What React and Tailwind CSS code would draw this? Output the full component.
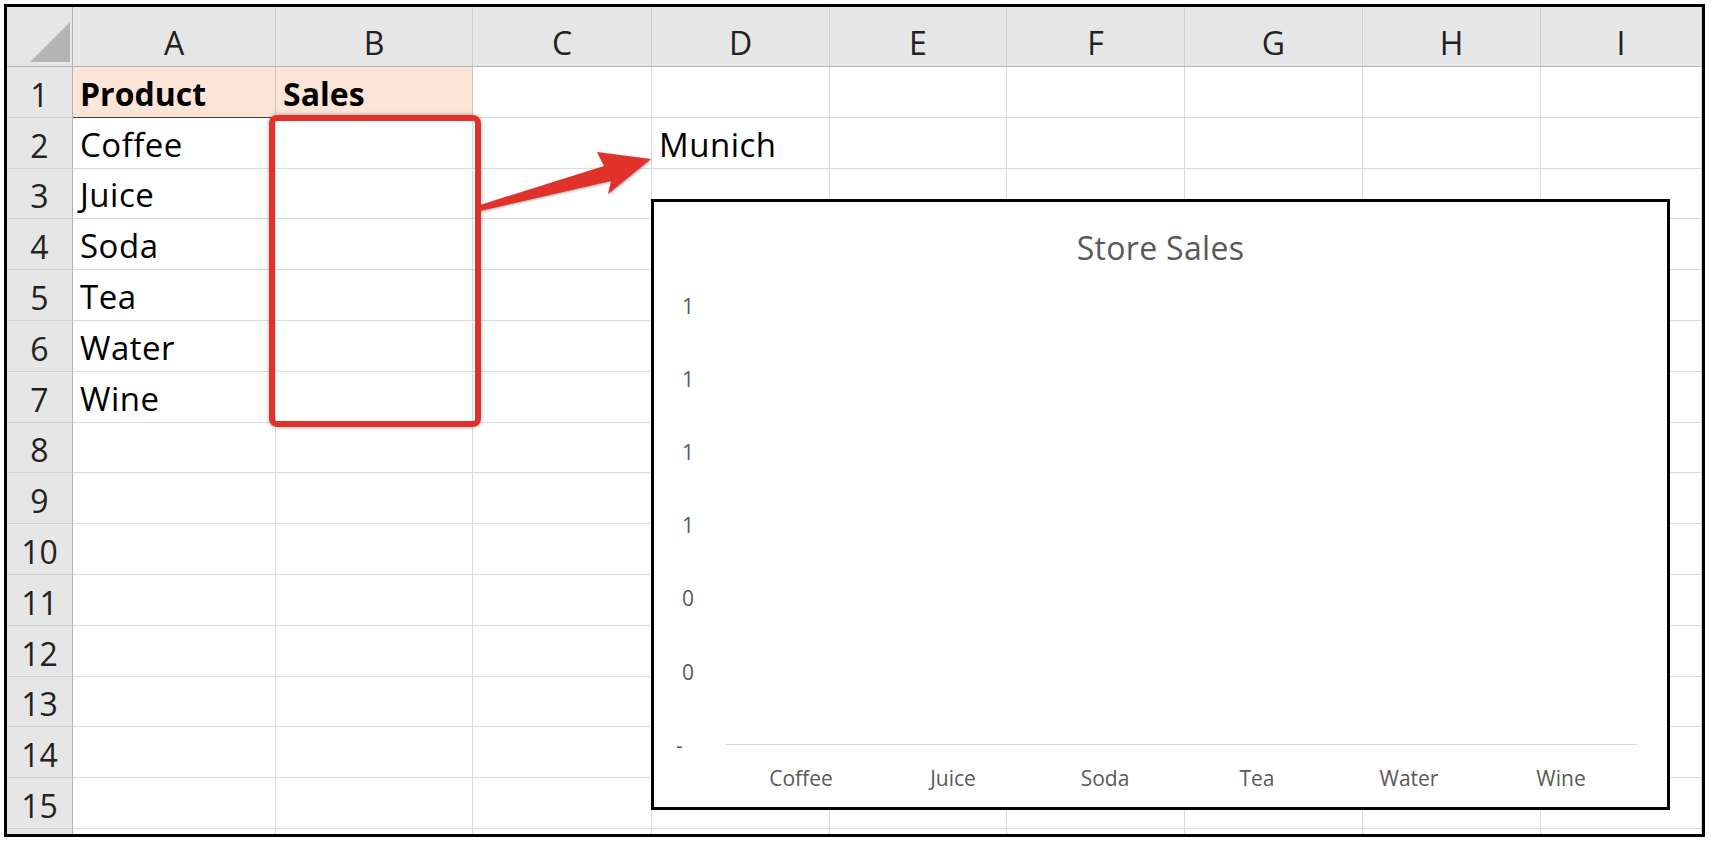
import React from 'react';

const columns = [
  { letter: 'A', width: 'w-[203px]' },
  { letter: 'B', width: 'w-[197px]' },
  { letter: 'C', width: 'w-[179px]' },
  { letter: 'D', width: 'w-[178px]' },
  { letter: 'E', width: 'w-[177px]' },
  { letter: 'F', width: 'w-[178px]' },
  { letter: 'G', width: 'w-[178px]' },
  { letter: 'H', width: 'w-[178px]' },
  { letter: 'I', width: 'flex-1' },
];

// cell contents keyed by "col+row"
const cells = {
  A1: { text: 'Product', bold: true },
  B1: { text: 'Sales', bold: true },
  A2: { text: 'Coffee' },
  A3: { text: 'Juice' },
  A4: { text: 'Soda' },
  A5: { text: 'Tea' },
  A6: { text: 'Water' },
  A7: { text: 'Wine' },
  D2: { text: 'Munich' },
};

const rows = Array.from({ length: 15 }, (_, i) => i + 1);
const categories = ['Coffee', 'Juice', 'Soda', 'Tea', 'Water', 'Wine'];
const axisLabels = ['1', '1', '1', '1', '0', '0', '-'];

const font = { fontFamily: '"Open Sans", "Noto Sans", sans-serif' };

const Chart = () => (
  <div className="absolute left-[644px] top-[192px] w-[1019px] h-[611px] border-[3px] border-black bg-white flex flex-col text-[#595959]">
    <div className="h-[67px] pt-[28px] text-center text-[32px] leading-[36px] tracking-[0.3px]">Store Sales</div>
    <div className="flex flex-1">
      <div className="w-[71px] flex flex-col">
        {axisLabels.map((label, i) => (
          <div
            key={i}
            className={`h-[73.2px] flex items-center text-[21px] leading-[24px] ${label === '-' ? 'pl-[22px]' : 'pl-[28px]'}`}
          >
            {label}
          </div>
        ))}
      </div>
      <div className="flex-1 mr-[30px] flex flex-col">
        <div className="h-[475px]"></div>
        <div className="border-t border-[#d9d9d9] grid grid-cols-6 pt-[19px]">
          {categories.map((c) => (
            <div key={c} className="text-center text-[21px] leading-[28px]">{c}</div>
          ))}
        </div>
      </div>
    </div>
  </div>
);

const App = () => {
  return (
    <div className="w-[1713px] h-[843px] bg-white pt-[4px] pl-[4px]" style={font}>
      <div className="relative w-[1701px] h-[833px] border-[3px] border-black overflow-hidden flex flex-col text-black">

        {/* COLUMN HEADERS */}
        <div className="flex h-[60px] shrink-0 bg-[#e6e6e6] border-b border-[#b4b4b4]">
          <div className="w-[66px] border-r border-[#b4b4b4] relative">
            <svg className="absolute left-0 top-0" width="66" height="60" viewBox="0 0 66 60">
              <polygon points="23,55 63,55 63,15" fill="#b4b4b4" />
            </svg>
          </div>
          {columns.map((col) => (
            <div
              key={col.letter}
              className={`${col.width} border-r border-[#d0d0d0] flex items-end justify-center pb-[7px] text-[32px] leading-[32px] text-[#222]`}
            >
              {col.letter}
            </div>
          ))}
        </div>

        {/* ROWS */}
        {rows.map((r) => (
          <div key={r} className="flex h-[50.8px] shrink-0">
            <div className="w-[66px] bg-[#e6e6e6] border-r border-b border-r-[#b4b4b4] border-b-[#d0d0d0] flex items-end justify-center pb-[6px] text-[32px] leading-[32px] text-[#222]">
              {r}
            </div>
            {columns.map((col) => {
              const cell = cells[`${col.letter}${r}`];
              const header = r === 1 && (col.letter === 'A' || col.letter === 'B');
              return (
                <div
                  key={col.letter}
                  className={`${col.width} border-r border-b flex items-end pl-[7px] pb-[7px] leading-[32px] whitespace-nowrap ${
                    header ? 'bg-[#fce4d6] border-r-[#d6c2b6] border-b-[#404040]' : 'border-[#dadada]'
                  } ${cell?.bold ? 'font-bold text-[32px]' : 'text-[33px] tracking-[0.5px]'}`}
                >
                  {cell?.text}
                </div>
              );
            })}
          </div>
        ))}

        {/* partial row 16 */}
        <div className="flex flex-1">
          <div className="w-[66px] bg-[#e6e6e6] border-r border-[#b4b4b4]"></div>
          {columns.map((col) => (
            <div key={col.letter} className={`${col.width} border-r border-[#dadada]`}></div>
          ))}
        </div>

        {/* RED SELECTION BOX */}
        <div className="absolute left-[262px] top-[108px] w-[212px] h-[312px] border-[6px] border-[#e0322b] rounded-[8px] shadow-[0_0_4px_rgba(0,0,0,0.35)]"></div>

        {/* ARROW */}
        <svg className="absolute left-[463px] top-[133px]" width="200" height="80" viewBox="470 140 200 80">
          <polygon
            points="480,205 604,166 597,152 651,159 608,194 611,181 480,211"
            fill="#e0322b"
            style={{ filter: 'drop-shadow(1px 1px 1px rgba(0,0,0,0.3))' }}
          />
        </svg>

        <Chart />
      </div>
    </div>
  );
};

export default App;
